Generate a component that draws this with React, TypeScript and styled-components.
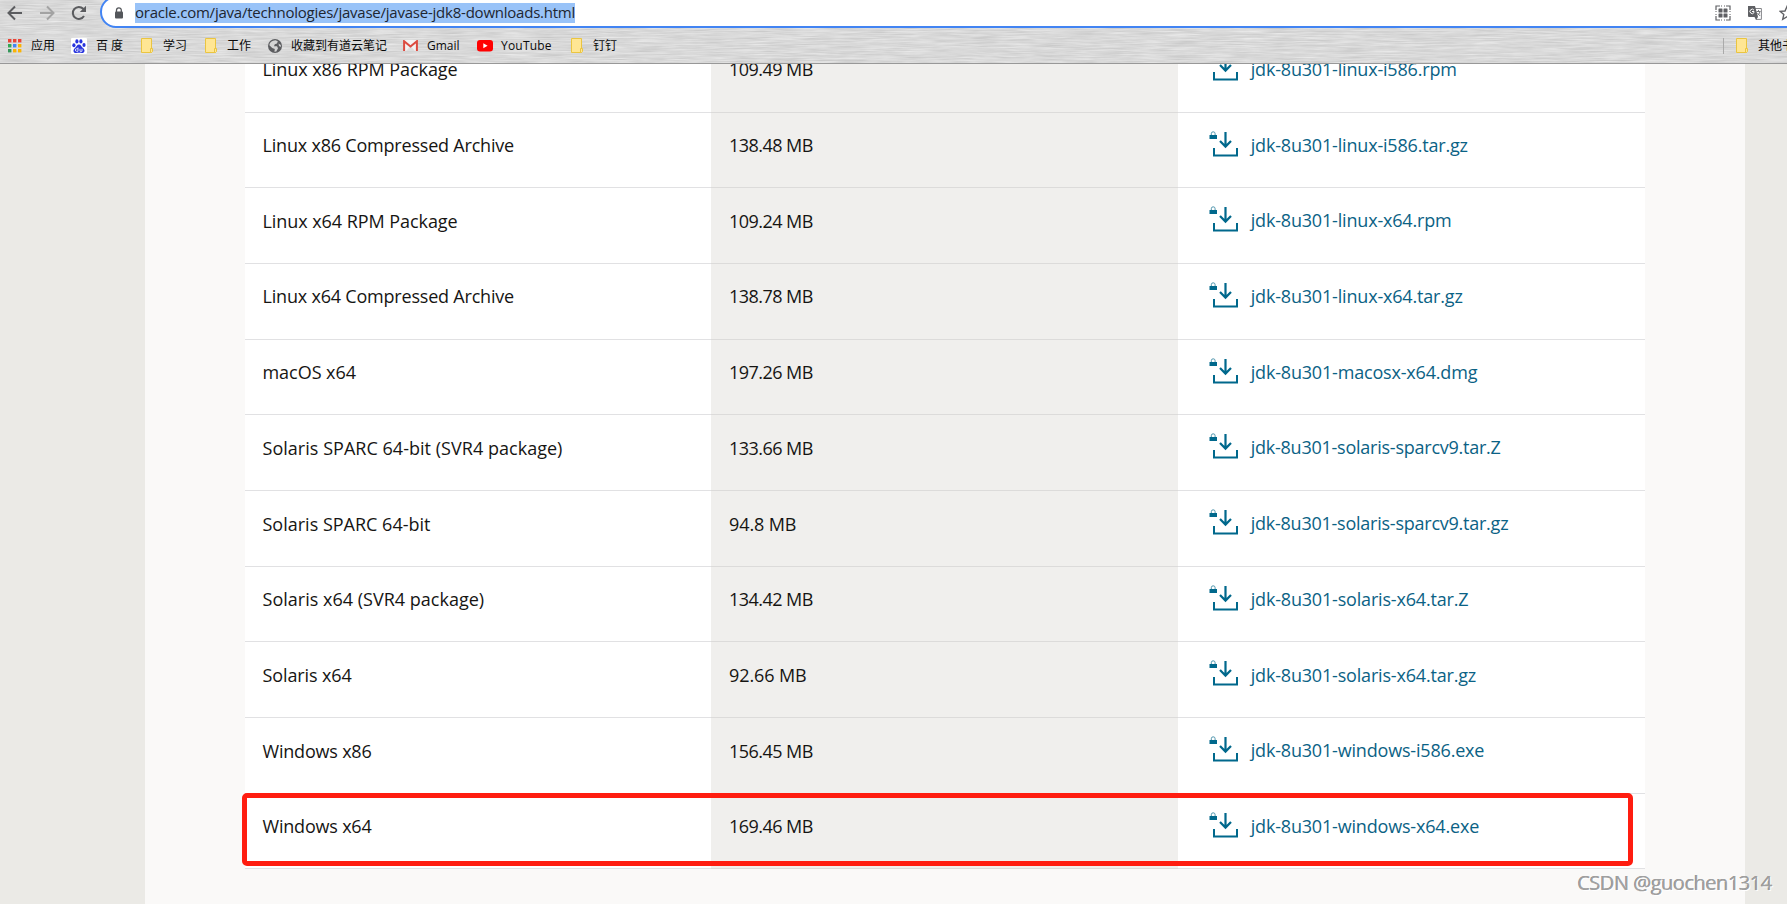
import React from "react";
import styled, { createGlobalStyle } from "styled-components";

const GlobalStyle = createGlobalStyle`
  * { box-sizing: border-box; }
  html, body { margin: 0; padding: 0; overflow: hidden; }
`;

const uiFont = `"Open Sans", "Noto Sans", "Noto Sans CJK SC", sans-serif`;

const Window = styled.div`
  position: relative;
  display: flex;
  flex-direction: column;
  width: 1787px;
  height: 904px;
  overflow: hidden;
  background: #ebeae6;
  font-family: ${uiFont};
`;

const Chrome = styled.header`
  position: relative;
  flex: none;
  height: 64px;
  overflow: hidden;
  background: #d6d6d6;
  border-bottom: 1px solid #989898;
`;

const Texture = styled.svg`
  position: absolute;
  inset: 0;
  width: 100%;
  height: 100%;
`;

const NavRow = styled.div`
  position: relative;
  display: flex;
  height: 28px;
  padding-left: 7px;
`;

const NavButton = styled.span<{ $dim?: boolean }>`
  display: flex;
  width: 16px;
  height: 26px;
  margin-right: 16px;
  align-items: center;
  color: ${(p) => (p.$dim ? "#a3a3a3" : "#5b5c5f")};
`;

const Omnibox = styled.div`
  display: flex;
  align-items: center;
  flex: none;
  width: 1730px;
  height: 32px;
  margin: -4px 0 0 -3px;
  padding: 2px 0 0 12px;
  background: #fff;
  border: 2px solid #4284f3;
  border-radius: 16px;
`;

const Url = styled.span`
  height: 20px;
  width: 440px;
  margin-left: 11px;
  background: #99c3f8;
  color: #202631;
  font-size: 15px;
  line-height: 19px;
  letter-spacing: -0.23px;
  white-space: nowrap;
`;

const OmniActions = styled.div`
  display: flex;
  flex: none;
  gap: 16px;
  margin-left: 1140px;
  color: #5f6064;
`;

const Bookmarks = styled.nav`
  position: relative;
  display: flex;
  align-items: center;
  height: 35px;
  padding-left: 8px;
`;

const Bookmark = styled.span<{ $w: number; $gap?: number; $track?: number }>`
  display: flex;
  flex: none;
  align-items: center;
  gap: ${(p) => p.$gap ?? 10}px;
  width: ${(p) => p.$w}px;
  color: #0a0a0a;
  font-size: 12px;
  line-height: 16px;
  letter-spacing: ${(p) => p.$track ?? 0}px;
  white-space: nowrap;
  svg { flex: none; }
`;

const Divider = styled.i`
  width: 1px;
  height: 16px;
  margin: 0 12px 0 auto;
  background: #aaa;
`;

const Viewport = styled.main`
  flex: 1;
  min-height: 0;
  width: 1600px;
  margin-left: 145px;
  padding: 0 100px;
  overflow: hidden;
  background: #faf9f8;
`;

const Table = styled.div`
  margin-top: -27.2px;
  font-size: 18px;
  line-height: 27px;
  color: #161513;
`;

const Row = styled.div`
  display: grid;
  grid-template-columns: 466px 467px 467px;
  height: 75.7px;
  background: #fff;
`;

const Cell = styled.div<{ $shade?: boolean; $track?: number }>`
  padding: 19.6px 0 0 17.5px;
  border-bottom: 1px solid ${(p) => (p.$shade ? "#dcdbda" : "#e1e1e3")};
  background: ${(p) => (p.$shade ? "#f0efed" : "#fff")};
  letter-spacing: ${(p) => p.$track ?? 0}px;
  white-space: nowrap;
`;

const SizeCell = styled(Cell)`
  padding-left: 18px;
`;

const LinkCell = styled(Cell)`
  display: flex;
  align-items: flex-start;
  gap: 11.7px;
  padding: 17px 0 0 31px;
  color: #00688c;
`;

const FileName = styled.a`
  margin-top: 2.2px;
  color: #0b6285;
`;

const Highlight = styled.div`
  position: absolute;
  left: 242px;
  top: 793px;
  width: 1391px;
  height: 73px;
  border: 5px solid #ff1d10;
  border-radius: 5px;
`;

const Watermark = styled.div`
  position: absolute;
  right: 15px;
  top: 869px;
  color: #a0a0a0;
  font-size: 20px;
  line-height: 28px;
  letter-spacing: -0.47px;
  text-shadow: 1px 1px 0 #fff, -0.5px -0.5px 0 #888;
  white-space: nowrap;
`;

const ArrowIcon = ({ flip }: { flip?: boolean }) => (
  <svg width="16" height="16" viewBox="0 0 16 16" fill="none" stroke="currentColor" strokeWidth="2">
    <path d={flip ? "M1 8H14M8 1.5L14.5 8L8 14.5" : "M15 8H2M8 1.5L1.5 8L8 14.5"} />
  </svg>
);

const ReloadIcon = () => (
  <svg width="16" height="16" viewBox="0 0 16 16">
    <path d="M13 11A6 6 0 1 1 12.2 3.8L14 5.5" fill="none" stroke="currentColor" strokeWidth="2" />
    <path d="M15 .8V7H8.8Z" fill="currentColor" />
  </svg>
);

const LockIcon = () => (
  <svg width="10" height="12" viewBox="0 0 10 12">
    <path d="M2.5 5V3.2a2.4 2.4 0 0 1 4.8 0V5" fill="none" stroke="#54575b" strokeWidth="1.3" />
    <rect x="1" y="4.5" width="8" height="7" rx="1" fill="#54575b" />
  </svg>
);

const QrIcon = () => (
  <svg width="16" height="16" viewBox="0 0 16 16" fill="currentColor">
    <path d="M1 5V1H5M11 1H15V5M15 11V15H11M5 15H1V11" fill="none" stroke="currentColor" strokeWidth="1.2" />
    <path d="M6 1h1M9 1h1M6 15h1M9 15h1M1 6v1M1 9v1M15 6v1M15 9v1" stroke="currentColor" />
    <rect x="3.5" y="3.5" width="4" height="4" rx=".5" />
    <rect x="8.5" y="3.5" width="4" height="4" rx=".5" />
    <rect x="3.5" y="8.5" width="4" height="4" rx=".5" />
    <rect x="8.5" y="8.5" width="4" height="4" rx=".5" />
  </svg>
);

const TranslateIcon = () => (
  <svg width="16" height="16" viewBox="0 0 16 16">
    <path d="M6 3.5H14.4V14.4H9" fill="#fff" stroke="#85868a" />
    <path d="M1 1H8L11 12H2A1 1 0 0 1 1 11Z" fill="#5f6064" />
    <path d="M7.5 12H11L9 15Z" fill="#5f6064" />
    <path d="M7 5.2A2.2 2.2 0 1 0 7 7.6V6.5H5" fill="none" stroke="#fff" />
    <path d="M9.5 6.5H13.5M11.5 5V6.5M13 6.5Q12.5 9 10.5 10.5M10.4 8L13.2 11" fill="none" stroke="#77787b" />
  </svg>
);

const StarIcon = () => (
  <svg width="16" height="16" viewBox="0 0 16 16" fill="none" stroke="currentColor" strokeWidth="1.4">
    <path d="M8 1.5L10 6L14.8 6.4L11.2 9.6L12.3 14.3L8 11.8L3.7 14.3L4.8 9.6L1.2 6.4L6 6Z" />
  </svg>
);

const dots = ["#ea4335", "#ea4335", "#ea4335", "#34a853", "#4285f4", "#fbb305", "#34965a", "#fbb305", "#fbb305"];
const AppsIcon = () => (
  <svg width="14" height="14" viewBox="0 0 14 14">
    {dots.map((c, i) => (
      <rect key={i} x={(i % 3) * 5} y={Math.floor(i / 3) * 5} width="3.4" height="3.4" fill={c} />
    ))}
  </svg>
);

const BaiduIcon = () => (
  <svg width="16" height="16" viewBox="0 0 16 16">
    <rect width="16" height="16" rx="1" fill="#fff" />
    <g fill="#2733dd">
      <ellipse cx="2.9" cy="7.3" rx="1.6" ry="2" />
      <ellipse cx="5.9" cy="3.4" rx="1.6" ry="2.1" />
      <ellipse cx="9.9" cy="3.4" rx="1.6" ry="2.1" />
      <ellipse cx="13" cy="7" rx="1.6" ry="2" />
      <path d="M8 6.5C10 6.5 10.3 8.7 12 10C14.7 12.2 13.5 15.3 10.8 15C9 14.6 7 14.6 5.2 15C2.3 15.3 1.5 12.2 4 10C5.6 8.7 6 6.5 8 6.5Z" />
    </g>
    <path d="M7 9.5V13.3H5.6a1.2 1.2 0 0 1 0-2.5H7M9 10.8V13.3H11V10.8" fill="none" stroke="#fff" strokeWidth=".8" />
  </svg>
);

const FolderIcon = () => (
  <svg width="12" height="15" viewBox="0 0 12 15">
    <path d="M.5 .5H10.5V14.5H.5Z" fill="#ffe694" stroke="#eac541" />
    <path d="M9.5 10.5H11.5V13.5L10.5 14.5H9.5Z" fill="#ffe694" stroke="#eac541" />
  </svg>
);

const GlobeIcon = () => (
  <svg width="14" height="14" viewBox="0 0 14 14">
    <circle cx="7" cy="7" r="7" fill="#5c5d60" />
    <path d="M7.5 1.3L9.8 2.2L9 4.5L6.8 5.2L6 7.2H9L10 9.2L8.3 12.4L6.4 12.8L6.8 10L4.2 9L1.4 6.2C1.6 3.5 4 1.4 7.5 1.3Z" fill="#d4d4d4" />
    <path d="M10.5 4.6L12.8 6V8L11 7Z" fill="#d4d4d4" />
  </svg>
);

const GmailIcon = () => (
  <svg width="15" height="11" viewBox="0 0 15 11">
    <path d="M1 0H14V11H1Z" fill="#f4f2f2" />
    <path d="M3 11L7.5 6L12 11" fill="#ddd" />
    <path d="M1.1 11V1.2L7.5 6.5L13.9 1.2V11" fill="none" stroke="#dc4b40" strokeWidth="2" />
  </svg>
);

const YouTubeIcon = () => (
  <svg width="16" height="12" viewBox="0 0 16 12">
    <rect width="16" height="11.5" rx="3" fill="#f00" />
    <path d="M6.3 3.2V8.3L10.6 5.75Z" fill="#fff" />
  </svg>
);

const DownloadIcon = () => (
  <svg width="30" height="27" viewBox="0 0 30 27" fill="none" stroke="#00688c">
    <path d="M2.3 6V3.7a1.9 1.9 0 0 1 3.8 0V6" stroke="#4f95ad" strokeWidth="1" />
    <rect x=".5" y="5" width="7.5" height="4" fill="#00688c" stroke="none" />
    <path d="M16.5 2V16M11 11L16.5 16.6L22 11" strokeWidth="2.2" />
    <path d="M5 18V25.5H28V18" strokeWidth="2" />
  </svg>
);

interface Download {
  name: string;
  track?: number;
  size: string;
  file: string;
}

const files: Download[] = [
  { name: "Linux x86 RPM Package", track: -0.06, size: "109.49 MB", file: "jdk-8u301-linux-i586.rpm" },
  { name: "Linux x86 Compressed Archive", track: -0.2, size: "138.48 MB", file: "jdk-8u301-linux-i586.tar.gz" },
  { name: "Linux x64 RPM Package", track: -0.06, size: "109.24 MB", file: "jdk-8u301-linux-x64.rpm" },
  { name: "Linux x64 Compressed Archive", track: -0.2, size: "138.78 MB", file: "jdk-8u301-linux-x64.tar.gz" },
  { name: "macOS x64", track: -0.04, size: "197.26 MB", file: "jdk-8u301-macosx-x64.dmg" },
  { name: "Solaris SPARC 64-bit (SVR4 package)", track: 0.03, size: "133.66 MB", file: "jdk-8u301-solaris-sparcv9.tar.Z" },
  { name: "Solaris SPARC 64-bit", size: "94.8 MB", file: "jdk-8u301-solaris-sparcv9.tar.gz" },
  { name: "Solaris x64 (SVR4 package)", track: 0.01, size: "134.42 MB", file: "jdk-8u301-solaris-x64.tar.Z" },
  { name: "Solaris x64", track: -0.12, size: "92.66 MB", file: "jdk-8u301-solaris-x64.tar.gz" },
  { name: "Windows x86", track: -0.2, size: "156.45 MB", file: "jdk-8u301-windows-i586.exe" },
  { name: "Windows x64", track: -0.2, size: "169.46 MB", file: "jdk-8u301-windows-x64.exe" },
];

export default function App() {
  return (
    <Window>
      <GlobalStyle />
      <Chrome>
        <Texture>
          <filter id="brushed" x="0" y="0" width="100%" height="100%" colorInterpolationFilters="sRGB">
            <feTurbulence type="fractalNoise" baseFrequency="0.03 0.7" numOctaves="3" seed="4" />
            <feColorMatrix values="0.17 0 0 0 0.765  0.17 0 0 0 0.765  0.17 0 0 0 0.765  0 0 0 0 1" />
          </filter>
          <rect width="100%" height="100%" filter="url(#brushed)" />
        </Texture>
        <NavRow>
          <NavButton><ArrowIcon /></NavButton>
          <NavButton $dim><ArrowIcon flip /></NavButton>
          <NavButton><ReloadIcon /></NavButton>
          <Omnibox>
            <LockIcon />
            <Url>oracle.com/java/technologies/javase/javase-jdk8-downloads.html</Url>
            <OmniActions>
              <QrIcon />
              <TranslateIcon />
              <StarIcon />
            </OmniActions>
          </Omnibox>
        </NavRow>
        <Bookmarks>
          <Bookmark $w={63} $gap={9}><AppsIcon />应用</Bookmark>
          <Bookmark $w={70} $gap={9}><BaiduIcon />百 度</Bookmark>
          <Bookmark $w={64}><FolderIcon />学习</Bookmark>
          <Bookmark $w={63}><FolderIcon />工作</Bookmark>
          <Bookmark $w={135} $gap={9}><GlobeIcon />收藏到有道云笔记</Bookmark>
          <Bookmark $w={74} $gap={9}><GmailIcon />Gmail</Bookmark>
          <Bookmark $w={94} $gap={8} $track={0.2}><YouTubeIcon />YouTube</Bookmark>
          <Bookmark $w={60}><FolderIcon />钉钉</Bookmark>
          <Divider />
          <Bookmark $w={51}><FolderIcon />其他书签</Bookmark>
        </Bookmarks>
      </Chrome>
      <Viewport>
        <Table>
          {files.map(({ name, track, size, file }) => (
            <Row key={file}>
              <Cell $track={track}>{name}</Cell>
              <SizeCell $shade $track={size.startsWith("1") ? -0.54 : -0.1}>{size}</SizeCell>
              <LinkCell $track={file.includes("sparc") ? -0.24 : -0.18}>
                <DownloadIcon />
                <FileName>{file}</FileName>
              </LinkCell>
            </Row>
          ))}
        </Table>
      </Viewport>
      <Highlight />
      <Watermark>CSDN @guochen1314</Watermark>
    </Window>
  );
}
